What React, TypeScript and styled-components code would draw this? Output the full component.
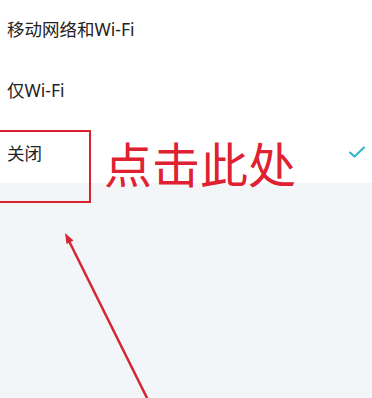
import React from "react";
import styled, { createGlobalStyle } from "styled-components";

const Global = createGlobalStyle`
  html, body { margin: 0; padding: 0; background: #f3f6f9; }
  body { font-family: "Noto Sans", "Noto Sans CJK SC", sans-serif; }
  #root { width: 372px; height: 398px; overflow: hidden; }
`;

const Page = styled.div`
  position: relative;
  width: 372px;
  height: 398px;
  overflow: hidden;
  background: #f3f6f9;
  display: flex;
  flex-direction: column;
`;

const List = styled.div`
  background: #ffffff;
  display: flex;
  flex-direction: column;
`;

const Row = styled.div<{ $h: number }>`
  height: ${(p) => p.$h}px;
  display: flex;
  align-items: center;
  justify-content: space-between;
  padding: 0 6px 0 7px;
  font-family: "Noto Sans", "Noto Sans CJK SC", sans-serif;
  font-size: 17.5px;
  color: #222222;
`;

const Check = styled.svg`
  width: 18px;
  height: 14px;
`;

const Rest = styled.div`
  flex: 1;
  background: #f3f6f9;
`;

const Box = styled.div`
  position: absolute;
  left: -3px;
  top: 130px;
  width: 90px;
  height: 69px;
  border: 2px solid #d8232f;
`;

const Callout = styled.div`
  position: absolute;
  left: 104px;
  top: 137px;
  font-family: "Noto Sans CJK SC", sans-serif;
  font-size: 48px;
  line-height: 50px;
  color: #e02131;
`;

const Arrow = styled.svg`
  position: absolute;
  left: 0;
  top: 0;
  width: 372px;
  height: 398px;
  pointer-events: none;
`;

const rows = [
  { label: "移动网络和Wi-Fi", h: 57, checked: false },
  { label: "仅Wi-Fi", h: 64, checked: false },
  { label: "关闭", h: 62, checked: true },
];

export default function App() {
  return (
    <>
      <Global />
      <Page>
        <List>
          {rows.map((r) => (
            <Row key={r.label} $h={r.h}>
              <span>{r.label}</span>
              {r.checked && (
                <Check viewBox="0 0 18 14">
                  <path
                    d="M2 7.5 L6.5 11.5 L16 2.5"
                    fill="none"
                    stroke="#2bb6c9"
                    strokeWidth="2"
                    strokeLinecap="round"
                    strokeLinejoin="round"
                  />
                </Check>
              )}
            </Row>
          ))}
        </List>
        <Rest />
        <Box />
        <Callout>点击此处</Callout>
        <Arrow viewBox="0 0 372 398">
          <line x1="69" y1="241" x2="149" y2="402" stroke="#d42633" strokeWidth="2.5" />
          <polygon points="65,233 66.5,244 73.5,240.5" fill="#d42633" />
        </Arrow>
      </Page>
    </>
  );
}
